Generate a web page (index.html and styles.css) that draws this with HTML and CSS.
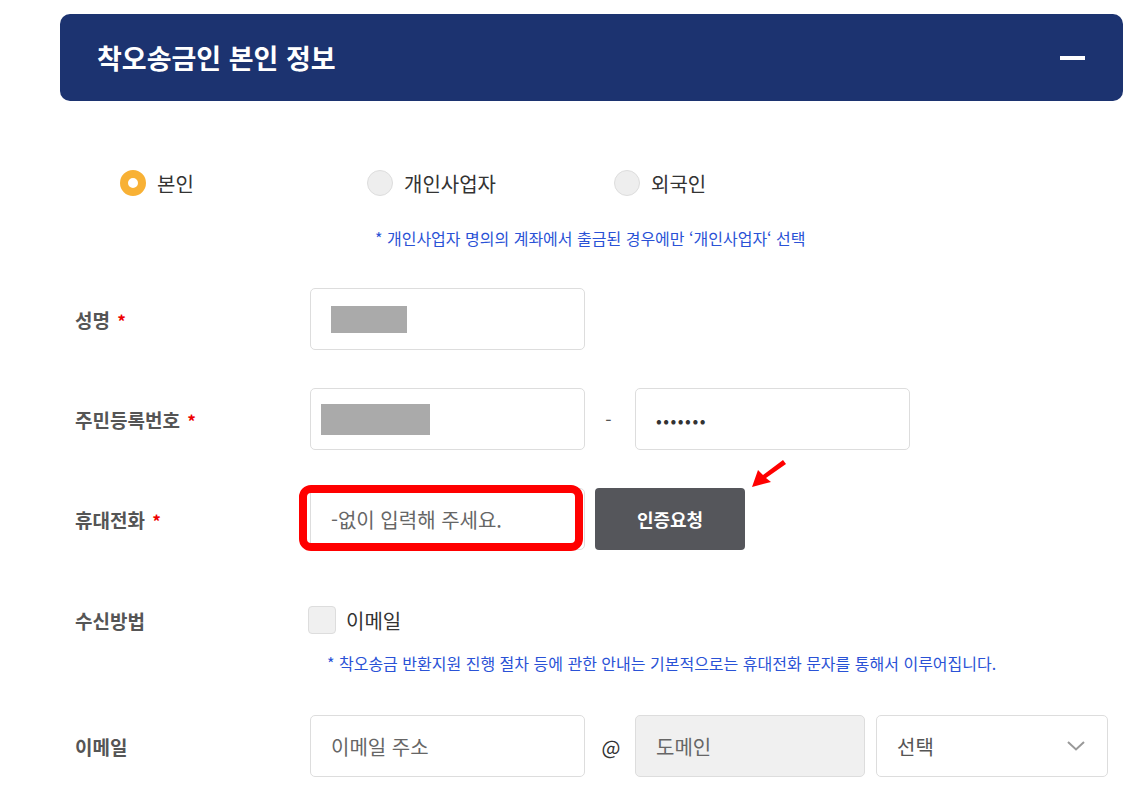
FILE: index.html
```html
<!DOCTYPE html>
<html lang="ko">
<head>
<meta charset="utf-8">
<link rel="stylesheet" href="styles.css">
</head>
<body>
<div class="page">
  <div class="header">
    <h2 class="title">착오송금인 본인 정보</h2>
    <span class="minus"></span>
  </div>

  <div class="radios">
    <label class="radio-item"><span class="radio on"></span><span>본인</span></label>
    <label class="radio-item"><span class="radio"></span><span>개인사업자</span></label>
    <label class="radio-item"><span class="radio"></span><span>외국인</span></label>
  </div>
  <p class="note note1">* 개인사업자 명의의 계좌에서 출금된 경우에만 ‘개인사업자‘ 선택</p>

  <div class="row row-first">
    <div class="label">성명 <span class="req">*</span></div>
    <div class="field"><span class="mask mask1"></span></div>
  </div>

  <div class="row">
    <div class="label">주민등록번호 <span class="req">*</span></div>
    <div class="field"><span class="mask mask2"></span></div>
    <div class="sep">-</div>
    <div class="field"><span class="dots">•••••••</span></div>
  </div>

  <div class="row">
    <div class="label">휴대전화 <span class="req">*</span></div>
    <div class="field highlight-wrap"><span class="ph">-없이 입력해 주세요.</span><span class="highlight"></span></div>
    <button class="btn">인증요청</button>
    <svg class="arrow" width="36" height="30" viewBox="0 0 36 30"><path d="M1 28 L7 11 L12 16 L32 1 L35 5 L15 19 L20 23 Z" fill="#f00"/></svg>
  </div>

  <div class="row row-check">
    <div class="label">수신방법</div>
    <label class="check-item"><span class="check"></span><span>이메일</span></label>
  </div>
  <p class="note note2">* 착오송금 반환지원 진행 절차 등에 관한 안내는 기본적으로는 휴대전화 문자를 통해서 이루어집니다.</p>

  <div class="row row-email">
    <div class="label">이메일</div>
    <div class="field"><span class="ph">이메일 주소</span></div>
    <div class="sep at">@</div>
    <div class="field domain"><span class="ph">도메인</span></div>
    <div class="field select"><span class="ph dark">선택</span>
      <svg class="chev" width="18" height="10" viewBox="0 0 18 10"><path d="M1 1 L9 8.5 L17 1" fill="none" stroke="#999" stroke-width="2"/></svg>
    </div>
  </div>
</div>
</body>
</html>
```

FILE: styles.css
```css
* { box-sizing: border-box; }
html, body { margin: 0; padding: 0; background: #fff; }
body { font-family: "Noto Sans CJK KR", "Noto Sans", sans-serif; color: #333; }

.page { padding: 14px 10px 0 60px; width: 1133px; }

.header {
  height: 87px;
  background: #1c3370;
  border-radius: 10px;
  display: flex;
  align-items: center;
  justify-content: space-between;
  padding: 0 38px 0 37px;
}
.title { margin: 0; color: #fff; font-size: 27px; font-weight: 700; letter-spacing: 0; line-height: 1; }
.minus { width: 25px; height: 4px; background: #fff; display: block; }

.radios { display: flex; margin-top: 69px; padding-left: 60px; height: 26px; align-items: center; }
.radio-item { width: 247px; display: flex; align-items: center; gap: 11px; font-size: 20px; color: #333; }
.radio { width: 26px; height: 26px; border-radius: 50%; background: #eee; border: 1px solid #ddd; display: block; }
.radio.on { background: #fff; border: 8px solid #f8b135; }

.note { margin: 0; color: #2a52d6; font-size: 16px; line-height: 20px; letter-spacing: 0; }
.note1 { margin-top: 32px; padding-left: 315px; }
.note2 { margin-top: 19px; padding-left: 267px; }

.row { display: flex; align-items: center; height: 62px; margin-top: 38px; position: relative; padding-left: 15px; }
.row-first { margin-top: 40px; }
.label { width: 235px; font-size: 19px; font-weight: 700; color: #555; letter-spacing: 0; }
.req { color: #e00; font-size: 17px; margin-left: 2px; }

.field {
  width: 275px; height: 62px; border: 1px solid #ddd; border-radius: 5px; background: #fff;
  display: flex; align-items: center; padding-left: 20px; position: relative;
}
.mask { display: block; background: #aaa; }
.mask1 { width: 76px; height: 27px; }
.mask2 { width: 109px; height: 31px; margin-left: -10px; }
.sep { width: 50px; text-align: center; color: #555; font-size: 18px; padding-right: 3px; }
.sep.at { font-size: 20px; color: #333; padding-right: 0; padding-left: 2px; }
.dots { font-size: 17px; letter-spacing: 1.5px; color: #333; }

.ph { font-size: 20px; color: #666; letter-spacing: 0; }
.ph.dark { color: #555; }

.highlight {
  position: absolute; left: -12px; top: -4px; width: 284px; height: 66px;
  border: 8px solid #ff0000; border-radius: 12px;
}
.btn {
  margin-left: 10px; width: 150px; height: 62px; border: 0; border-radius: 4px;
  background: #55565b; color: #fff; font-family: inherit; font-size: 18px; font-weight: 700;
}
.arrow { position: absolute; left: 691px; top: -29px; }

.row-check { height: 28px; margin-top: 56px; }
.check-item { display: flex; align-items: center; gap: 10px; font-size: 20px; color: #333; margin-left: -2px; }
.check { width: 28px; height: 28px; background: #f0f0f0; border: 1px solid #ddd; border-radius: 4px; display: block; }

.row-email { margin-top: 42px; }
.domain { width: 230px; background: #f0f0f0; }
.select { width: 232px; margin-left: 11px; justify-content: space-between; padding-right: 22px; }
```
